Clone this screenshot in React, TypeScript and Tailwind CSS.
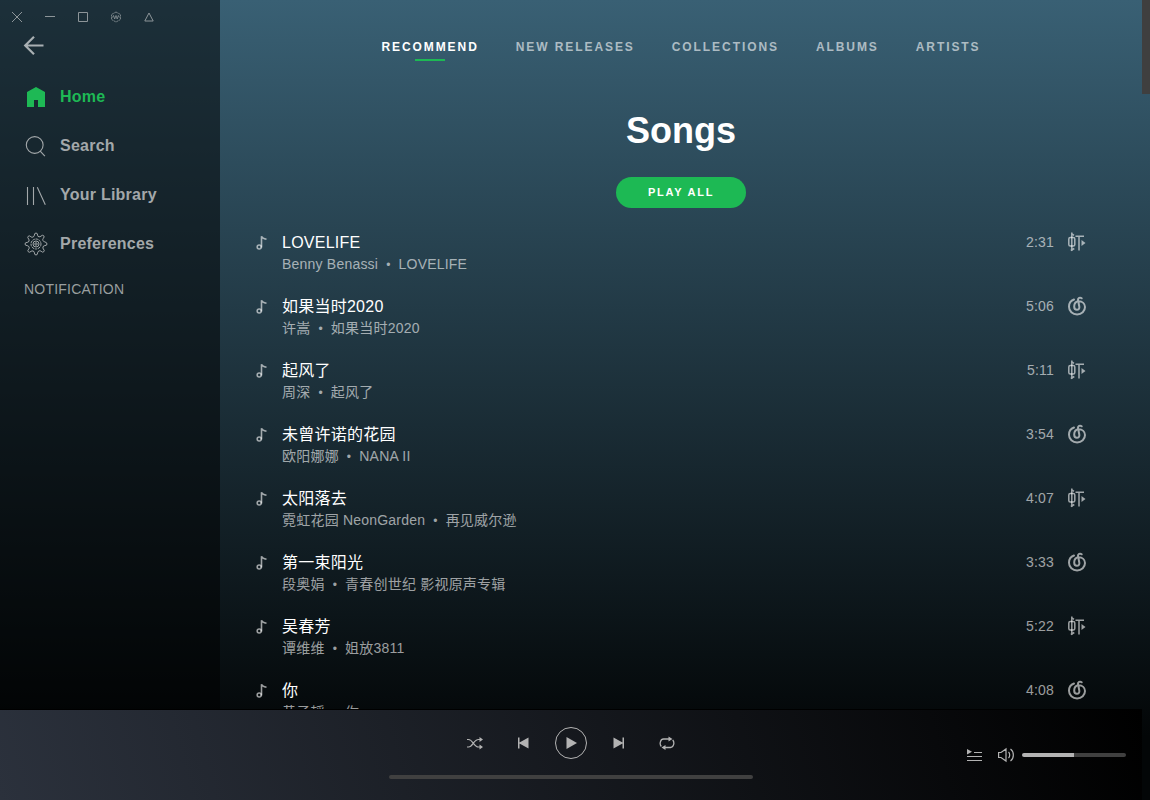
const navItems = [
  { title: "Home", icon: HomeIcon, active: true },
  { title: "Search", icon: SearchIcon, active: false },
  { title: "Your Library", icon: LibraryIcon, active: false },
  { title: "Preferences", icon: GearIcon, active: false },
];

const tabs = ["RECOMMEND", "NEW RELEASES", "COLLECTIONS", "ALBUMS", "ARTISTS"];

const songs = [
  { title: "LOVELIFE", artist: "Benny Benassi", album: "LOVELIFE", time: "2:31", source: "xiami" },
  { title: "如果当时2020", artist: "许嵩", album: "如果当时2020", time: "5:06", source: "netease" },
  { title: "起风了", artist: "周深", album: "起风了", time: "5:11", source: "xiami" },
  { title: "未曾许诺的花园", artist: "欧阳娜娜", album: "NANA II", time: "3:54", source: "netease" },
  { title: "太阳落去", artist: "霓虹花园 NeonGarden", album: "再见威尔逊", time: "4:07", source: "xiami" },
  { title: "第一束阳光", artist: "段奥娟", album: "青春创世纪 影视原声专辑", time: "3:33", source: "netease" },
  { title: "吴春芳", artist: "谭维维", album: "姐放3811", time: "5:22", source: "xiami" },
  { title: "你", artist: "黄子韬", album: "你", time: "4:08", source: "netease" },
];

function HomeIcon() {
  return (
    <svg width="24" height="24" viewBox="0 0 24 24" fill="currentColor">
      <path d="M12 2l9 5v15h-7v-7h-4v7H3V7z" />
    </svg>
  );
}

function SearchIcon() {
  return (
    <svg width="24" height="24" viewBox="0 0 24 24" fill="none" stroke="currentColor" strokeWidth="1.1">
      <circle cx="10.7" cy="11" r="8.4" />
      <path d="M16.2 17.2l4.7 5" />
    </svg>
  );
}

function LibraryIcon() {
  return (
    <svg width="24" height="24" viewBox="0 0 24 24" fill="none" stroke="currentColor" strokeWidth="1.1">
      <path d="M3.5 4v18M9.5 4v18M13.3 4.2l8 17.6" />
    </svg>
  );
}

function GearIcon() {
  return (
    <svg width="24" height="24" viewBox="0 0 24 24" fill="none" stroke="currentColor">
      <path d="M10.4 3.2Q10.4 1 12 1t1.6 2.2q0 1.4 1.4 1.6 1.1.2 2-.7 1.6-1.5 2.7-.4t-.4 2.7q-.9.9-.4 2 .5 1.3 1.9 1.5Q23 10.4 23 12t-2.2 1.6q-1.4 0-1.8 1.4-.4 1.1.4 2 1.5 1.6.4 2.7t-2.7-.4q-.9-.9-2-.4-1.3.5-1.5 1.9Q13.600 23 12 23t-1.600-2.200q0-1.400-1.400-1.800-1.100-.4-2 .4-1.600 1.500-2.700.4t.4-2.700q.9-.9.4-2-.5-1.300-1.900-1.500Q1 13.600 1 12t2.200-1.600q1.400 0 1.800-1.400.4-1.100-.4-2-1.500-1.600-.4-2.700t2.700.4q.9.9 2 .4 1.300-.5 1.500-1.900z" />
      <circle cx="12" cy="12" r="5" strokeDasharray="2.5 0.7" />
      <circle cx="12" cy="12" r="3" />
      <circle cx="12" cy="12" r="1.2" />
    </svg>
  );
}

function NoteIcon() {
  return (
    <svg className="shrink-0" width="12" height="16" viewBox="0 0 12 16" fill="none" stroke="currentColor" strokeWidth="1.6">
      <circle cx="3.2" cy="12" r="2" />
      <path d="M5.500 12.500V1.200c.5 1.600 2.500 2.500 5 3" />
    </svg>
  );
}

function XiamiIcon() {
  return (
    <svg width="20" height="20" viewBox="0 0 20 20" fill="none" stroke="currentColor" strokeWidth="1.5">
      <rect x="1.8" y="5.5" width="6" height="8.5" rx="1.5" />
      <path d="M4.800 .5v18.500M3.800 18.500l3.500-2M4.500 1.500l2.500 1.800M8.500 4.300H17M12 4.300v14.200" />
      <path d="M14.500 8l4 3-4 3z" fill="currentColor" stroke="none" />
    </svg>
  );
}

function NeteaseIcon() {
  return (
    <svg width="20" height="20" viewBox="0 0 20 20" fill="none" stroke="currentColor" strokeWidth="2" strokeLinecap="round">
      <path d="M7 3.500C4 4.600 2 7.300 2 10.700c0 4.500 3.600 7.700 8.100 7.700s7.900-3.200 7.900-7.400c0-3.400-2.700-5.700-6.300-5.700-2.800.2-4.500 2.200-4.500 5.200 0 2 1 3.300 2.700 3.300s2.800-1.300 2.400-3.300L11 4c-.2-1.900 1.900-3 3.700-1.700" />
    </svg>
  );
}

function WindowControls() {
  const button = "flex size-[33px] items-center justify-center";
  return (
    <div className="flex h-[33px] text-[#8d9599]">
      <button className={button} aria-label="Close">
        <svg width="12" height="12" viewBox="0 0 12 12" fill="none" stroke="currentColor">
          <path d="M1 1l10 10M11 1L1 11" />
        </svg>
      </button>
      <button className={button} aria-label="Minimize">
        <svg width="12" height="12" viewBox="0 0 12 12" fill="none" stroke="currentColor">
          <path d="M1 5.500h10" />
        </svg>
      </button>
      <button className={button} aria-label="Maximize">
        <svg width="12" height="12" viewBox="0 0 12 12" fill="none" stroke="currentColor">
          <path d="M1.500 1.500h9v9h-9z" />
        </svg>
      </button>
      <button className={button} aria-label="Developer tools">
        <svg width="12" height="12" viewBox="0 0 12 12" fill="none" stroke="currentColor" strokeWidth="0.8">
          <path d="M6 1l4.500 2.500v5L6 11 1.500 8.500v-5z" strokeDasharray="2 0.6" />
          <path d="M2.500 6.500l1-2 1.200 3.500L6 4.500 7.200 8l1.200-3.500 1 2" />
        </svg>
      </button>
      <button className={button} aria-label="Pin">
        <svg width="12" height="12" viewBox="0 0 12 12" fill="none" stroke="currentColor">
          <path d="M6 2l4.200 8H1.800z" />
        </svg>
      </button>
    </div>
  );
}

function Sidebar() {
  return (
    <aside className="w-[220px] shrink-0 bg-black/50">
      <WindowControls />
      <button className="ml-[22px] block text-[#a9b0b3]" aria-label="Back">
        <svg width="24" height="24" viewBox="0 0 24 24" fill="none" stroke="currentColor" strokeWidth="2.2">
          <path d="M21.500 12.500H3.500M12 3.700l-8.800 8.800 8.800 8.800" />
        </svg>
      </button>
      <nav className="mt-[15px]">
        {navItems.map((item) => {
          const Icon = item.icon;
          return (
            <a
              key={item.title}
              href="#"
              className={`flex h-[49px] items-center gap-3 pl-6 text-base font-bold tracking-[0.015em] ${
                item.active ? "text-[#1eb955]" : "text-[#a3a8aa]"
              }`}
            >
              <Icon />
              {item.title}
            </a>
          );
        })}
      </nav>
      <h2 className="mt-[11px] pl-6 text-sm tracking-[0.015em] text-[#999e9f]">NOTIFICATION</h2>
    </aside>
  );
}

function SongRow({ song }: { song: (typeof songs)[number] }) {
  return (
    <li className="flex h-16 items-start pt-[10px] pr-[23px] pl-1">
      <div className="flex h-[22px] items-center text-white/60">
        <NoteIcon />
      </div>
      <div className="ml-[14px] min-w-0 flex-1">
        <div className="truncate text-base leading-[22px] tracking-[0.015em] text-white">{song.title}</div>
        <div className="truncate text-sm leading-5 tracking-[0.015em] text-white/60">
          {song.artist}
          <span className="mx-2 text-xs">•</span>
          {song.album}
        </div>
      </div>
      <div className="flex h-5 items-center gap-[13px] text-white/60">
        <span className="text-sm tracking-[0.015em]">{song.time}</span>
        {song.source === "xiami" ? <XiamiIcon /> : <NeteaseIcon />}
      </div>
    </li>
  );
}

function Player() {
  return (
    <footer className="mr-2 grid h-[91px] shrink-0 grid-cols-[1fr_364px_1fr] border-t border-black bg-linear-75/srgb from-[#2b313c] to-black text-[#b3b3b3]">
      <div />
      <div>
        <div className="flex h-[65px] items-center justify-center gap-4">
          <button className="flex size-8 items-center justify-center" aria-label="Shuffle">
            <svg width="16" height="16" viewBox="0 0 16 16" fill="none" stroke="currentColor" strokeWidth="1.2">
              <path d="M0 4.500h1.500c4.500 0 5 7.500 10 7.500H13M0 12h1.500c4.500 0 5-7.500 10-7.500H13" />
              <path d="M12.500 2l3.500 2.500L12.500 7zM12.500 9.500L16 12l-3.500 2.500z" fill="currentColor" stroke="none" />
            </svg>
          </button>
          <button className="flex size-8 items-center justify-center" aria-label="Previous">
            <svg width="12" height="12" viewBox="0 0 12 12" fill="currentColor">
              <path d="M1 0.500h1.500v5L11.500 0.500v11L2.500 6.500v5H1z" />
            </svg>
          </button>
          <button className="flex size-8 items-center justify-center rounded-full border border-current" aria-label="Play">
            <svg width="12" height="12" viewBox="0 0 12 12" fill="currentColor">
              <path d="M1.500 0L12 6 1.500 12z" />
            </svg>
          </button>
          <button className="flex size-8 items-center justify-center" aria-label="Next">
            <svg width="12" height="12" viewBox="0 0 12 12" fill="currentColor">
              <path d="M11 0.500H9.500v5L.5 0.500v11L9.500 6.500v5H11z" />
            </svg>
          </button>
          <button className="flex size-8 items-center justify-center" aria-label="Repeat">
            <svg width="16" height="16" viewBox="0 0 16 16" fill="none" stroke="currentColor" strokeWidth="1.3">
              <path d="M2.300 11.500C0 9 1.500 4 4.500 4H11M13.700 5c2.300 2.500.8 7.500-2.200 7.500H5" />
              <path d="M9.500 1.500L13.500 4 9.500 6.500zM6.500 10l-4 2.500 4 2.500z" fill="currentColor" stroke="none" />
            </svg>
          </button>
        </div>
        <div className="h-1 rounded-full bg-[#404040]" />
      </div>
      <div className="flex items-center justify-end gap-4 pr-4">
        <button aria-label="Queue">
          <svg width="16" height="16" viewBox="0 0 16 16" fill="none" stroke="currentColor">
            <path d="M8 5.500h8M1 9.500h15M1 13.500h15" />
            <path d="M1 2l5 2.700L1 7.500z" fill="currentColor" stroke="none" />
          </svg>
        </button>
        <div className="flex items-center gap-2">
          <button aria-label="Mute">
            <svg width="16" height="16" viewBox="0 0 16 16" fill="none" stroke="currentColor" strokeWidth="1.2">
              <path d="M.6 5.500H3l5-3.500v12L3 10.500H.6zM10.500 5c1.600 1.500 1.600 4.500 0 6M12.500 2c3.800 2.800 3.800 9.200 0 12" />
            </svg>
          </button>
          <input
            type="range"
            aria-label="Volume"
            defaultValue={50}
            className="h-1 w-[104px] appearance-none rounded-full bg-linear-to-r from-[#b3b3b3] from-50% to-[#404040] to-50% [&::-webkit-slider-thumb]:size-0 [&::-webkit-slider-thumb]:appearance-none"
          />
        </div>
      </div>
    </footer>
  );
}

export default function App() {
  return (
    <div className="flex h-screen flex-col overflow-hidden bg-[#030607] bg-linear-to-b/srgb from-[#396074] to-[#030607] to-92% font-['Liberation_Sans','Noto_Sans_CJK_SC',sans-serif]">
      <div className="relative flex min-h-0 flex-1">
        <Sidebar />
        <main className="min-w-0 flex-1 overflow-y-auto pr-2 [scrollbar-width:none]">
          <nav className="flex justify-center gap-[37px] pt-[39px]">
            {tabs.map((tab, index) => (
              <a
                key={tab}
                href="#"
                className={`flex flex-col items-center text-xs leading-4 font-bold tracking-[0.16em] ${
                  index === 0 ? "text-white" : "text-white/60"
                }`}
              >
                {tab}
                {index === 0 && <span className="mt-1 h-[2px] w-[30px] bg-[#1db954]" />}
              </a>
            ))}
          </nav>
          <section className="px-8">
            <h1 className="mt-[46px] text-center text-4xl leading-12 font-bold text-white">Songs</h1>
            <button className="mx-auto mt-[22px] block h-[31px] w-[130px] rounded-full bg-[#1db954] text-[11px] font-bold tracking-[0.16em] text-white">
              PLAY ALL
            </button>
            <ul className="mt-[14px]">
              {songs.map((song) => (
                <SongRow key={song.title} song={song} />
              ))}
            </ul>
          </section>
        </main>
        <div className="absolute top-0 right-0 h-[94px] w-2 bg-[#3f3f3f]" />
      </div>
      <Player />
    </div>
  );
}
